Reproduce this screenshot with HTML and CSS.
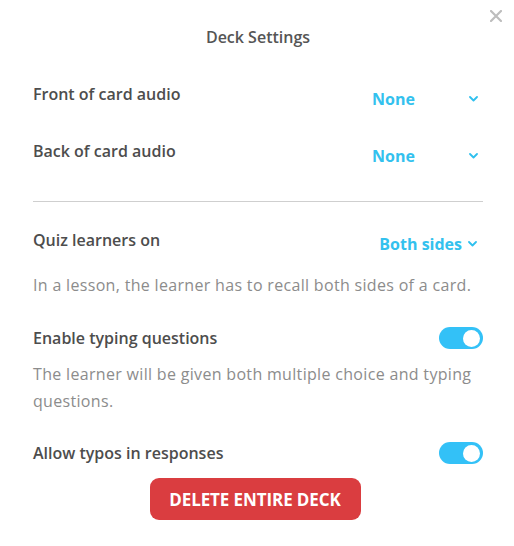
FILE: index.html
```html
<!DOCTYPE html>
<html>
<head>
<meta charset="utf-8">
<link rel="stylesheet" href="styles.css">
</head>
<body>
<div class="modal">
  <button class="close" aria-label="Close">
    <svg width="12" height="12" viewBox="0 0 12 12"><path d="M1 1L11 11M11 1L1 11" stroke="#bdbdbd" stroke-width="2.2" stroke-linecap="round"/></svg>
  </button>
  <h1 class="title">Deck Settings</h1>

  <div class="row row-first">
    <span class="label">Front of card audio</span>
    <div class="select select-wide"><span>None</span><svg class="chev" width="9" height="6" viewBox="0 0 9 6"><path d="M1 1L4.5 4.5L8 1" fill="none" stroke="#2fc0ee" stroke-width="1.8" stroke-linecap="round" stroke-linejoin="round"/></svg></div>
  </div>
  <div class="row row-second">
    <span class="label">Back of card audio</span>
    <div class="select select-wide"><span>None</span><svg class="chev" width="9" height="6" viewBox="0 0 9 6"><path d="M1 1L4.5 4.5L8 1" fill="none" stroke="#2fc0ee" stroke-width="1.8" stroke-linecap="round" stroke-linejoin="round"/></svg></div>
  </div>

  <hr class="divider">

  <div class="row row-quiz">
    <span class="label">Quiz learners on</span>
    <div class="select select-auto"><span>Both sides</span><svg class="chev" width="9" height="6" viewBox="0 0 9 6"><path d="M1 1L4.5 4.5L8 1" fill="none" stroke="#2fc0ee" stroke-width="1.8" stroke-linecap="round" stroke-linejoin="round"/></svg></div>
  </div>
  <p class="desc desc-quiz">In a lesson, the learner has to recall both sides of a card.</p>

  <div class="row row-toggle row-typing">
    <span class="label">Enable typing questions</span>
    <span class="toggle"><span class="knob"></span></span>
  </div>
  <p class="desc desc-typing">The learner will be given both multiple choice and typing questions.</p>

  <div class="row row-toggle row-typos">
    <span class="label">Allow typos in responses</span>
    <span class="toggle"><span class="knob"></span></span>
  </div>

  <div class="actions">
    <button class="delete">DELETE ENTIRE DECK</button>
  </div>
</div>
</body>
</html>
```
FILE: styles.css
```css
* { box-sizing: border-box; }
html, body { margin: 0; padding: 0; background: #ffffff; }
body {
  font-family: "Open Sans", "Noto Sans", "Liberation Sans", sans-serif;
  font-size: 16px;
  color: #4d4d4d;
}
.modal {
  position: relative;
  width: 514px;
  height: 546px;
  padding: 25px 31px 0 33px;
}
.close {
  position: absolute;
  top: 10px;
  right: 12px;
  width: 12px;
  height: 12px;
  padding: 0;
  border: 0;
  background: none;
  display: flex;
}
.title {
  margin: 0;
  font-size: 16px;
  line-height: 24px;
  font-weight: 600;
  text-align: center;
  color: #555555;
}
.row {
  display: flex;
  justify-content: space-between;
  align-items: flex-start;
}
.label {
  line-height: 24px;
  font-weight: 600;
  color: #4d4d4d;
}
.row-first { margin-top: 33px; }
.row-second { margin-top: 28px; }
.select {
  display: flex;
  align-items: center;
  justify-content: space-between;
  line-height: 24px;
  font-weight: 700;
  color: #33c1ee;
  margin-top: 5px;
}
.select-wide { width: 111px; padding-right: 5px; }
.select-auto { gap: 6px; padding-right: 6px; margin-top: 4px; }
.chev { display: block; }
.divider {
  margin: 33px 0 0;
  border: 0;
  border-top: 1px solid #cfcfcf;
  height: 0;
}
.row-quiz { margin-top: 26px; }
.desc {
  margin: 0;
  line-height: 27px;
  color: #8c8c8c;
  letter-spacing: 0.32px;
}
.desc-quiz { margin-top: 16px; }
.row-toggle { align-items: center; }
.row-typing { margin-top: 27px; }
.desc-typing { margin-top: 11px; padding-right: 8px; }
.row-typos { margin-top: 26px; }
.toggle {
  width: 44px;
  height: 22px;
  border-radius: 11px;
  background: #33c1f7;
  display: flex;
  align-items: center;
  justify-content: flex-end;
  padding-right: 3px;
}
.knob {
  width: 17px;
  height: 17px;
  border-radius: 50%;
  background: #ffffff;
}
.actions {
  display: flex;
  justify-content: center;
  margin-top: 13px;
  padding-right: 6px;
}
.delete {
  width: 211px;
  height: 42px;
  border: 0;
  border-radius: 9px;
  background: #da3d40;
  color: #ffffff;
  font-family: "Open Sans", "Noto Sans", "Liberation Sans", sans-serif;
  font-size: 17px;
  font-weight: 700;
  letter-spacing: -0.1px;
}
```
